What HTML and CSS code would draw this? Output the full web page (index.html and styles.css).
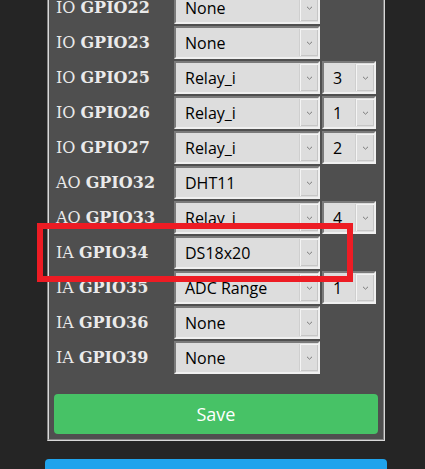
FILE: index.html
```html
<!DOCTYPE html>
<html>
<head>
<meta charset="utf-8">
<title>Configure Module</title>
<link rel="stylesheet" href="styles.css">
</head>
<body>
<div class="page">
  <fieldset class="module">
    <div class="gpio-grid">
      <div class="lbl">IO <b>GPIO22</b></div>
      <div class="sel main"><span class="val">None</span><span class="arrow"><svg viewBox="0 0 7 4" width="7" height="4"><path d="M1 0.8 L3.5 3.2 L6 0.8" /></svg></span></div>
      <div class="empty"></div>

      <div class="lbl">IO <b>GPIO23</b></div>
      <div class="sel main"><span class="val">None</span><span class="arrow"><svg viewBox="0 0 7 4" width="7" height="4"><path d="M1 0.8 L3.5 3.2 L6 0.8" /></svg></span></div>
      <div class="empty"></div>

      <div class="lbl">IO <b>GPIO25</b></div>
      <div class="sel main"><span class="val">Relay_i</span><span class="arrow"><svg viewBox="0 0 7 4" width="7" height="4"><path d="M1 0.8 L3.5 3.2 L6 0.8" /></svg></span></div>
      <div class="sel idx"><span class="val">3</span><span class="arrow"><svg viewBox="0 0 7 4" width="7" height="4"><path d="M1 0.8 L3.5 3.2 L6 0.8" /></svg></span></div>

      <div class="lbl">IO <b>GPIO26</b></div>
      <div class="sel main"><span class="val">Relay_i</span><span class="arrow"><svg viewBox="0 0 7 4" width="7" height="4"><path d="M1 0.8 L3.5 3.2 L6 0.8" /></svg></span></div>
      <div class="sel idx"><span class="val">1</span><span class="arrow"><svg viewBox="0 0 7 4" width="7" height="4"><path d="M1 0.8 L3.5 3.2 L6 0.8" /></svg></span></div>

      <div class="lbl">IO <b>GPIO27</b></div>
      <div class="sel main"><span class="val">Relay_i</span><span class="arrow"><svg viewBox="0 0 7 4" width="7" height="4"><path d="M1 0.8 L3.5 3.2 L6 0.8" /></svg></span></div>
      <div class="sel idx"><span class="val">2</span><span class="arrow"><svg viewBox="0 0 7 4" width="7" height="4"><path d="M1 0.8 L3.5 3.2 L6 0.8" /></svg></span></div>

      <div class="lbl">AO <b>GPIO32</b></div>
      <div class="sel main"><span class="val">DHT11</span><span class="arrow"><svg viewBox="0 0 7 4" width="7" height="4"><path d="M1 0.8 L3.5 3.2 L6 0.8" /></svg></span></div>
      <div class="empty"></div>

      <div class="lbl">AO <b>GPIO33</b></div>
      <div class="sel main"><span class="val">Relay_i</span><span class="arrow"><svg viewBox="0 0 7 4" width="7" height="4"><path d="M1 0.8 L3.5 3.2 L6 0.8" /></svg></span></div>
      <div class="sel idx"><span class="val">4</span><span class="arrow"><svg viewBox="0 0 7 4" width="7" height="4"><path d="M1 0.8 L3.5 3.2 L6 0.8" /></svg></span></div>

      <div class="lbl">IA <b>GPIO34</b></div>
      <div class="sel main"><span class="val">DS18x20</span><span class="arrow"><svg viewBox="0 0 7 4" width="7" height="4"><path d="M1 0.8 L3.5 3.2 L6 0.8" /></svg></span></div>
      <div class="empty"></div>

      <div class="lbl">IA <b>GPIO35</b></div>
      <div class="sel main"><span class="val">ADC Range</span><span class="arrow"><svg viewBox="0 0 7 4" width="7" height="4"><path d="M1 0.8 L3.5 3.2 L6 0.8" /></svg></span></div>
      <div class="sel idx"><span class="val">1</span><span class="arrow"><svg viewBox="0 0 7 4" width="7" height="4"><path d="M1 0.8 L3.5 3.2 L6 0.8" /></svg></span></div>

      <div class="lbl">IA <b>GPIO36</b></div>
      <div class="sel main"><span class="val">None</span><span class="arrow"><svg viewBox="0 0 7 4" width="7" height="4"><path d="M1 0.8 L3.5 3.2 L6 0.8" /></svg></span></div>
      <div class="empty"></div>

      <div class="lbl">IA <b>GPIO39</b></div>
      <div class="sel main"><span class="val">None</span><span class="arrow"><svg viewBox="0 0 7 4" width="7" height="4"><path d="M1 0.8 L3.5 3.2 L6 0.8" /></svg></span></div>
      <div class="empty"></div>
    </div>
    <button class="btn save">Save</button>
  </fieldset>
  <button class="btn config">Configuration</button>
</div>
<div class="highlight"></div>
</body>
</html>
```

FILE: styles.css
```css
html, body {
  margin: 0;
  padding: 0;
  background: #252525;
  height: 100%;
  overflow: hidden;
}

.page {
  width: 342px;
  margin-left: 45px;
  margin-top: -11px;
}

.module {
  margin: 0 2px;
  padding: 0 5px 5px 5px;
  background: #4f4f4f;
  border: 2px groove #d8d8d8;
  min-width: 0;
}

.gpio-grid {
  display: grid;
  grid-template-columns: 118px 146px 54px;
  column-gap: 2px;
  row-gap: 2px;
  grid-auto-rows: 33px;
}

.lbl {
  display: flex;
  align-items: center;
  padding-left: 2px;
  font-family: "DejaVu Serif", serif;
  font-size: 16px;
  color: #eaeaea;
  white-space: nowrap;
}

.lbl b {
  margin-left: 5px;
}

.sel {
  box-sizing: border-box;
  display: flex;
  align-items: stretch;
  background: #dddddd;
  border-style: solid;
  border-width: 2px;
  border-color: #7a7a7a #f0f0f0 #f0f0f0 #7a7a7a;
  font-family: "Open Sans", sans-serif;
  font-size: 16px;
  color: #000;
}

.val {
  flex: 1;
  display: flex;
  align-items: center;
  padding-left: 9px;
  white-space: nowrap;
  overflow: hidden;
}

.arrow {
  box-sizing: border-box;
  width: 18px;
  margin: 1px 0 1px 0;
  display: flex;
  align-items: center;
  justify-content: center;
  border-left: 1px solid #f4f4f4;
  border-top: 1px solid #f4f4f4;
  box-shadow: inset -1px -1px 0 #c6c6c6, -1px 0 0 #cfcfcf;
}

.arrow svg path {
  fill: none;
  stroke: #7a7a7a;
  stroke-width: 1;
}

.btn {
  display: block;
  width: 100%;
  border: 0;
  border-radius: 4px;
  color: #fff;
  font-family: "Open Sans", sans-serif;
  font-size: 18px;
  line-height: 40px;
  height: 40px;
  padding: 0;
}

.save {
  margin-top: 20px;
  background: #47c266;
}

.config {
  margin-top: 18px;
  background: #1fa3ec;
}

.highlight {
  position: absolute;
  left: 37px;
  top: 223px;
  width: 316px;
  height: 59px;
  box-sizing: border-box;
  border: 6px solid #ed1c24;
}
```
